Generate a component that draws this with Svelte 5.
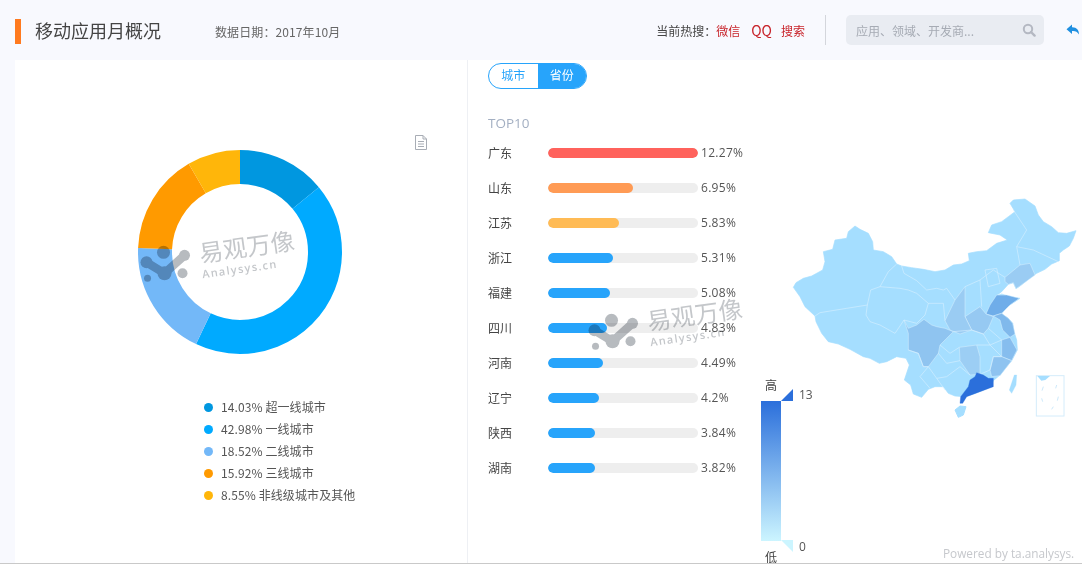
<script>
  const slices = [
    { pct: 14.03, label: '超一线城市', color: '#0097e0' },
    { pct: 42.98, label: '一线城市', color: '#00aaff' },
    { pct: 18.52, label: '二线城市', color: '#73b8f8' },
    { pct: 15.92, label: '三线城市', color: '#ff9a00' },
    { pct: 8.55, label: '非线级城市及其他', color: '#ffb60a' }
  ];

  const provinces = [
    { name: '广东', pct: 12.27, color: '#ff625c' },
    { name: '山东', pct: 6.95, color: '#ff9b55' },
    { name: '江苏', pct: 5.83, color: '#ffbb55' },
    { name: '浙江', pct: 5.31, color: '#27a4fb' },
    { name: '福建', pct: 5.08, color: '#27a4fb' },
    { name: '四川', pct: 4.83, color: '#27a4fb' },
    { name: '河南', pct: 4.49, color: '#27a4fb' },
    { name: '辽宁', pct: 4.2, color: '#27a4fb' },
    { name: '陕西', pct: 3.84, color: '#27a4fb' },
    { name: '湖南', pct: 3.82, color: '#27a4fb' }
  ];

  // donut segments, clockwise from 12 o'clock
  const R = 85;
  const C = 2 * Math.PI * R;
  const total = slices.reduce((s, x) => s + x.pct, 0);
  let run = 0;
  const arcs = slices.map((s) => {
    const len = (s.pct / total) * C;
    const arc = { color: s.color, dash: `${len} ${C - len}`, offset: -run };
    run += len;
    return arc;
  });

  // province shapes, traced in a 906x720 box over the map area
  const land = '40,292 48,278 70,265 95,258 128,240 135,215 130,185 158,178 165,150 200,145 205,125 225,108 240,118 265,130 278,155 280,180 310,185 335,200 350,222 365,228 395,233 430,238 465,245 495,240 520,225 545,222 568,212 565,190 590,185 620,182 650,160 682,150 660,135 625,128 635,105 665,95 685,80 705,65 690,40 700,30 735,27 765,48 775,75 790,95 815,110 835,128 860,130 888,122 880,145 868,168 850,180 838,190 838,212 815,222 795,238 770,250 745,268 720,288 708,296 700,278 685,283 665,305 648,318 665,312 690,320 720,325 700,338 680,350 665,372 685,385 698,400 702,425 710,450 712,480 695,512 680,530 660,555 640,572 632,590 610,600 580,612 552,620 525,618 505,610 490,590 465,590 445,598 425,622 400,612 392,585 373,570 388,525 378,505 350,500 320,515 298,520 270,505 250,500 210,478 175,462 145,455 125,430 108,395 105,378 75,350 60,320';
  const shaded = [
    { fill: '#8fc4f0', pts: '372,390 385,415 410,405 432,388 455,405 470,410 495,415 520,425 500,445 480,465 475,490 445,530 430,530 415,490 385,480 385,430' },
    { fill: '#6fade9', pts: '618,372 630,345 650,315 680,315 718,325 690,345 665,370 640,378' },
    { fill: '#80b9ec', pts: '640,378 665,370 685,385 698,400 705,432 690,442 668,420 660,390' },
    { fill: '#86bdee', pts: '665,450 690,442 711,480 695,512 665,500' },
    { fill: '#8ec3f0', pts: '640,500 665,500 695,512 660,557 635,560 630,540' },
    { fill: '#96c9f2', pts: '555,380 600,350 618,372 640,380 625,415 610,432 575,420' },
    { fill: '#9accf3', pts: '675,262 720,225 750,220 765,255 720,288 708,296 700,278 685,283 675,275' },
    { fill: '#9accf3', pts: '495,392 525,330 555,290 555,380 575,420 540,432 510,420' },
    { fill: '#9ccef4', pts: '538,472 590,465 600,500 600,553 570,555 540,512' }
  ];
  const borders = [
    '350,222 325,245 300,290 272,300 262,345 200,355 120,368 105,378',
    '262,345 258,375 270,395 300,405 345,430 372,390 410,400 435,375 445,340 410,310 385,300 360,295 300,290',
    '365,228 372,250 410,272 440,300 470,295 490,300 500,295 525,330',
    '445,340 490,340 495,392',
    '555,290 600,270 640,240 675,262',
    '600,270 605,350',
    '615,240 650,235 660,280 625,290 615,240',
    '720,225 710,170 740,120 700,60',
    '710,170 760,180 835,215',
    '520,425 575,420 610,432 630,465 665,450',
    '625,415 665,450',
    '590,465 630,465 665,500 640,500 630,540 600,553',
    '538,472 510,490 480,465',
    '475,490 500,520 540,512',
    '445,530 470,565 500,560 540,530 570,555',
    '385,480 415,490 430,530 445,530 420,560 450,595',
    '470,565 495,600'
  ];
</script>

<div class="page">
  <header class="topbar">
    <div class="heading">
      <i class="accent"></i>
      <h1>移动应用月概况</h1>
      <span class="date">数据日期：2017年10月</span>
    </div>
    <div class="tools">
      <div class="hot">当前热搜：<em>微信</em><em class="qq">QQ</em><em>搜索</em></div>
      <i class="sep"></i>
      <div class="search">
        <span>应用、领域、开发商...</span>
        <svg width="14" height="14" viewBox="0 0 14 14"><circle cx="6" cy="6" r="4.200" fill="none" stroke="#b4b8c2" stroke-width="2"/><path d="M9 9l3.600 3.600" stroke="#b4b8c2" stroke-width="2.400" stroke-linecap="round"/></svg>
      </div>
      <svg class="back" width="14" height="14" viewBox="0 0 14 14"><path d="M6 1.500L0.500 6.200 6 11V8c3-.3 5.500.6 7 3.500C13 7 10.500 4 6 4.200z" fill="#1f8fe0"/></svg>
    </div>
  </header>

  <main class="content">
    <section class="left">
      <svg class="doc" width="12" height="15" viewBox="0 0 12 15"><path d="M.5.500h7.500l3.500 3.500v10.500h-11zM8 .5v3.500h3.500M3 6.500h6M3 9h6M3 11.500h6" fill="none" stroke="#a8adb5"/></svg>
      <div class="donut">
        <svg width="204" height="204" viewBox="0 0 204 204">
          <g transform="rotate(-90 102 102)">
            {#each arcs as a}
              <circle cx="102" cy="102" r={R} fill="none" stroke={a.color} stroke-width="34" stroke-dasharray={a.dash} stroke-dashoffset={a.offset}/>
            {/each}
          </g>
        </svg>
      </div>
      <ul class="legend">
        {#each slices as s}
          <li><i style="background:{s.color}"></i>{s.pct}% {s.label}</li>
        {/each}
      </ul>
      <div class="mark mark-a">
        <svg width="52" height="40" viewBox="0 0 52 40"><g fill="#6f7780"><circle cx="24" cy="7" r="6.500"/><circle cx="45" cy="10" r="5.500"/><circle cx="7" cy="17" r="6"/><circle cx="43" cy="28" r="5"/><circle cx="8" cy="33" r="3.500"/><path d="M7 17L25 28 45 10" fill="none" stroke="#6f7780" stroke-width="8.500"/><circle cx="25" cy="28" r="7"/></g></svg>
        <div><b>易观万像</b><small>Analysys.cn</small></div>
      </div>
    </section>

    <section class="right">
      <div class="switch"><span>城市</span><span class="on">省份</span></div>
      <div class="top">TOP10</div>
      <div class="rows">
        {#each provinces as p}
          <div class="row">
            <span class="name">{p.name}</span>
            <span class="track"><i style="width:{(p.pct / 12.27) * 100}%;background:{p.color}"></i></span>
            <span class="val">{p.pct}%</span>
          </div>
        {/each}
      </div>

      <svg class="map" width="302" height="240" viewBox="0 0 906 720">
        <polygon points={land} fill="#a5deff" stroke="#a5deff" stroke-width="2" stroke-linejoin="round"/>
        {#each shaded as s}
          <polygon points={s.pts} fill={s.fill} stroke="#d8f0ff" stroke-width="1.500" stroke-linejoin="round"/>
        {/each}
        {#each borders as b}
          <polyline points={b} fill="none" stroke="#d8f0ff" stroke-width="1.800" stroke-linejoin="round"/>
        {/each}
        <polygon points="570,570 585,560 590,548 610,555 625,565 640,565 640,590 600,605 560,620 548,640 540,640 542,620 565,590" fill="#2b6fdb" stroke="#2b6fdb" stroke-linejoin="round"/>
        <polygon points="525,660 540,648 558,650 550,675 535,682" fill="#a5deff" stroke="#a5deff" stroke-width="3" stroke-linejoin="round"/>
        <polygon points="688,600 703,555 710,555 708,585 695,610" fill="#a5deff" stroke="#a5deff" stroke-linejoin="round"/>
        <rect x="769" y="557" width="83" height="121" fill="none" stroke="#d4ecfb" stroke-width="3"/>
        <path d="M772 558h38l-14 12-12 2z" fill="#a5deff"/>
        <path d="M790 590l-4 12M830 585l-3 10M785 625l3 10M835 620l-3 12M820 650l-5 8" stroke="#cde9fb" stroke-width="3" fill="none"/>
      </svg>

      <div class="scale">
        <span class="end hi">高</span>
        <div class="ramp"></div>
        <svg class="tri t1" width="12" height="12" viewBox="0 0 12 12"><path d="M0 12L12 0v12z" fill="#2b6fdb"/></svg>
        <svg class="tri t2" width="12" height="12" viewBox="0 0 12 12"><path d="M0 0h12v12z" fill="#ccf5ff"/></svg>
        <span class="num n1">13</span>
        <span class="num n2">0</span>
        <span class="end lo">低</span>
      </div>

      <div class="mark mark-b">
        <svg width="52" height="40" viewBox="0 0 52 40"><g fill="#6f7780"><circle cx="24" cy="7" r="6.500"/><circle cx="45" cy="10" r="5.500"/><circle cx="7" cy="17" r="6"/><circle cx="43" cy="28" r="5"/><circle cx="8" cy="33" r="3.500"/><path d="M7 17L25 28 45 10" fill="none" stroke="#6f7780" stroke-width="8.500"/><circle cx="25" cy="28" r="7"/></g></svg>
        <div><b>易观万像</b><small>Analysys.cn</small></div>
      </div>

      <div class="powered">Powered by ta.analysys.</div>
    </section>
  </main>
</div>

<style>
  :global(body) {
    margin: 0;
    background: #f8f9fe;
  }

  .page {
    width: 1082px;
    height: 564px;
    overflow: hidden;
    font-family: "Noto Sans CJK SC", "Open Sans", sans-serif;
    color: #555;
    font-size: 12px;
    display: flex;
    flex-direction: column;
    border-bottom: 1px solid #c9c9c9;
    box-sizing: border-box;
  }

  .topbar {
    height: 60px;
    flex: none;
    display: flex;
    justify-content: space-between;
    align-items: center;
    padding-left: 15px;
  }

  .heading {
    display: flex;
    align-items: center;
  }

  .accent {
    width: 6px;
    height: 25px;
    margin-top: 2px;
    background: #ff7a1f;
  }

  h1 {
    margin: 0 0 0 14px;
    font-size: 18px;
    font-weight: 400;
    color: #444;
    width: 180px;
    line-height: 24px;
  }

  .date {
    font-size: 12px;
    color: #666;
    margin-top: 3px;
    letter-spacing: 0.1px;
  }

  .tools {
    display: flex;
    align-items: center;
    margin-right: 2px;
  }

  .hot {
    color: #444;
  }

  .hot em {
    font-style: normal;
    color: #c8252c;
  }

  .hot .qq {
    font-size: 14px;
    margin: 0 9px 0 11px;
  }

  .sep {
    width: 1px;
    height: 30px;
    background: #d4d6dc;
    margin: 0 20px;
  }

  .search {
    width: 198px;
    height: 30px;
    padding: 0 8px 0 10px;
    box-sizing: border-box;
    border-radius: 5px;
    background: #e9ecf2;
    color: #a6abb4;
    display: flex;
    align-items: center;
    justify-content: space-between;
  }

  .back {
    margin-left: 22px;
  }

  .content {
    flex: 1;
    display: flex;
    margin-left: 15px;
    background: #fff;
    min-height: 0;
  }

  .left {
    width: 452px;
    flex: none;
    position: relative;
    border-right: 1px solid #eef0f4;
  }

  .doc {
    position: absolute;
    left: 400px;
    top: 75px;
  }

  .donut {
    display: flex;
    justify-content: center;
    padding-top: 90px;
  }

  .donut svg {
    margin-left: -3px;
  }

  .legend {
    list-style: none;
    margin: 42px 0 0 189px;
    padding: 0;
  }

  .legend li {
    height: 22px;
    line-height: 22px;
    display: flex;
    align-items: center;
    color: #555;
    white-space: pre;
    letter-spacing: 0.1px;
  }

  .legend i {
    width: 9px;
    height: 9px;
    border-radius: 50%;
    margin-right: 8px;
  }

  .right {
    flex: 1;
    position: relative;
    padding: 3px 0 0 20px;
  }

  .switch {
    display: flex;
    width: 99px;
    height: 26px;
    box-sizing: border-box;
    border: 1px solid #27a4fb;
    border-radius: 13px;
    overflow: hidden;
    color: #27a4fb;
  }

  .switch span {
    flex: 1;
    text-align: center;
    line-height: 22px;
  }

  .switch .on {
    background: #27a4fb;
    color: #fff;
  }

  .top {
    margin-top: 24px;
    height: 20px;
    line-height: 20px;
    font-size: 13.500px;
    color: #a3afc2;
    font-family: "Open Sans", sans-serif;
  }

  .rows {
    margin-top: 2px;
  }

  .row {
    display: flex;
    align-items: center;
    height: 35px;
  }

  .name {
    width: 60px;
    color: #444;
  }

  .track {
    width: 150px;
    height: 10px;
    border-radius: 5px;
    background: #eeeeee;
    overflow: hidden;
  }

  .track i {
    display: block;
    height: 100%;
    border-radius: 5px;
  }

  .val {
    margin-left: 3px;
    margin-top: -1px;
    color: #555;
    letter-spacing: 0.3px;
    font-family: "Open Sans", sans-serif;
  }

  .map {
    position: absolute;
    left: 312px;
    top: 130px;
  }

  .scale {
    position: absolute;
    left: 293px;
    top: 315px;
    width: 60px;
    height: 189px;
  }

  .ramp {
    position: absolute;
    left: 0;
    top: 26px;
    width: 20px;
    height: 140px;
    background: linear-gradient(#2b6fdb, #ccf5ff);
  }

  .tri {
    position: absolute;
    left: 20px;
  }

  .t1 {
    top: 14px;
  }

  .t2 {
    top: 165px;
  }

  .num {
    position: absolute;
    left: 38px;
    color: #555;
    line-height: 14px;
    font-family: "Open Sans", sans-serif;
  }

  .n1 {
    top: 13px;
  }

  .n2 {
    top: 165px;
  }

  .end {
    position: absolute;
    left: 4px;
    line-height: 14px;
    color: #444;
  }

  .hi {
    top: 3px;
  }

  .lo {
    top: 175px;
  }

  .mark {
    position: absolute;
    display: flex;
    align-items: center;
    gap: 9px;
    transform: rotate(-8deg);
    opacity: 0.5;
    mix-blend-mode: multiply;
    pointer-events: none;
  }

  .mark svg {
    transform: rotate(8deg);
    flex: none;
  }

  .mark b {
    display: block;
    font-weight: 400;
    font-size: 24px;
    line-height: 28px;
    color: #8a8f96;
  }

  .mark small {
    display: block;
    font-family: "Open Sans", sans-serif;
    font-size: 11px;
    font-weight: 600;
    letter-spacing: 1.300px;
    line-height: 16px;
    color: #8a8f96;
  }

  .mark-a {
    left: 124px;
    top: 176px;
  }

  .mark-b {
    left: 119px;
    top: 244px;
  }

  .powered {
    position: absolute;
    left: 475px;
    bottom: 2px;
    white-space: nowrap;
    color: #c6c8cc;
    font-family: "Open Sans", sans-serif;
    font-size: 11.800px;
  }
</style>
